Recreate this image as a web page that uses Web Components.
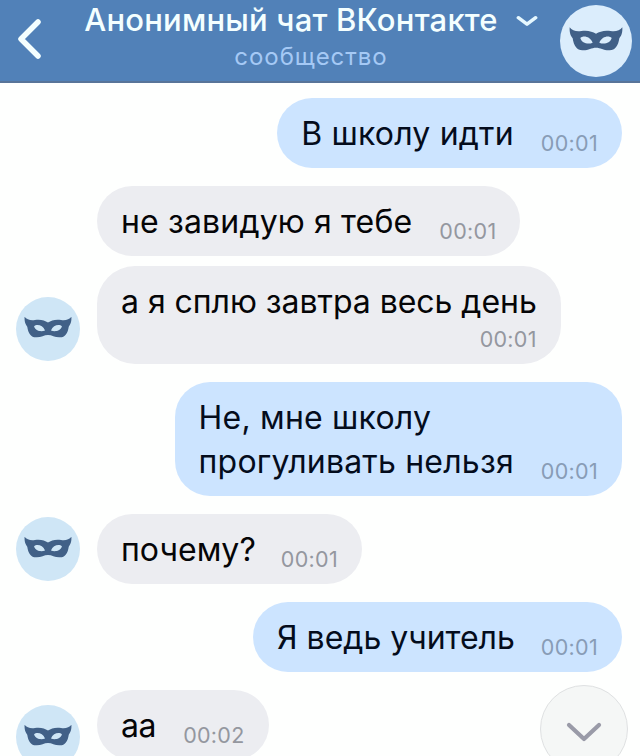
<!DOCTYPE html>
<html lang="ru">
<head>
<meta charset="utf-8">
<title>Анонимный чат ВКонтакте</title>
<style>
  html,
  body {
    height: 100%;
    margin: 0;
    overflow: hidden;
    background: #fefffe;
    font-family: Inter, "Liberation Sans", sans-serif;
  }
</style>
</head>
<body>
<chat-screen>
  <chat-header slot="header" name="Анонимный чат ВКонтакте" status="сообщество"></chat-header>
  <chat-message out time="00:01" style="--spacing: 0.2px">В школу идти</chat-message>
  <chat-message time="00:01" style="--spacing: 0.15px">не завидую я тебе</chat-message>
  <chat-message grouped avatar stacked time="00:01" style="--spacing: -0.04px">а я сплю завтра весь день</chat-message>
  <chat-message out time="00:01" style="--spacing: 0.2px">Не, мне школу<br>прогуливать нельзя</chat-message>
  <chat-message avatar time="00:01" style="--spacing: 0.05px; --gap: 25px">почему?</chat-message>
  <chat-message out time="00:01" style="--gap: 26px">Я ведь учитель</chat-message>
  <chat-message avatar style="--avatar-drop: -9px; --spacing: -0.4px" time="00:02">аа</chat-message>
  <scroll-button slot="floating"></scroll-button>
</chat-screen>

<script>
class MaskAvatar extends HTMLElement {
  constructor() {
    super();
    this.attachShadow({ mode: "open" });
  }

  static get styles() {
    return /* css */`
      :host {
        display: block;
        flex: none;
        width: var(--size, 64px);
        height: var(--size, 64px);
        border-radius: 50%;
        background: var(--avatar-color, #cfe6f6);
        overflow: hidden;
      }

      svg {
        display: block;
        width: 100%;
        height: 100%;
      }
    `;
  }

  connectedCallback() {
    this.shadowRoot.innerHTML = /* html */`
    <style>${MaskAvatar.styles}</style>
    <svg viewBox="0 0 216 216">
      <path fill="#416087" fill-rule="evenodd" d="M29 67 C36 77 49 80 64 78 C84 75 97 80 108 86 C119 80 132 75 152 78 C167 80 180 77 187 67 C188 84 184 93 178 100 C175 122 165 136 149 136 C131 137 122 128 108 128 C94 128 85 137 67 136 C51 136 41 122 38 100 C32 93 28 84 29 67 Z M61 99 C69 90 91 94 98 113 C85 119 65 115 61 99 Z M155 99 C147 90 125 94 118 113 C131 119 151 115 155 99 Z"/>
    </svg>`;
  }
}

class ChatHeader extends HTMLElement {
  constructor() {
    super();
    this.attachShadow({ mode: "open" });
  }

  static get styles() {
    return /* css */`
      :host {
        display: flex;
        box-sizing: border-box;
        height: 83px;
        padding: 0 8px 0 17px;
        border-bottom: 2px solid #587499;
        background: #5181b8;
      }

      .back {
        flex: none;
        width: 26px;
        height: 42px;
        margin-top: 18px;
      }

      .titles {
        flex: 1;
        display: flex;
        flex-direction: column;
        align-items: center;
        padding-left: 19px;
      }

      .name {
        display: flex;
        align-items: center;
        gap: 18px;
        height: 39px;
        color: #f4ffff;
        font-size: 31px;
        font-weight: 500;
        letter-spacing: 0.2px;
        white-space: nowrap;
      }

      .name svg {
        width: 22px;
        height: 13px;
        margin-top: 3px;
      }

      .status {
        color: #a5c9f5;
        font-size: 24px;
        line-height: 36px;
        letter-spacing: 0.95px;
      }

      mask-avatar {
        --size: 72px;
        --avatar-color: #dbedfc;
        margin-top: 5px;
      }
    `;
  }

  connectedCallback() {
    this.shadowRoot.innerHTML = /* html */`
    <style>${ChatHeader.styles}</style>
    <svg class="back" viewBox="0 0 26 42">
      <path d="M21 4 L4 21 L21 38" fill="none" stroke="#f4ffff" stroke-width="5.500" stroke-linecap="round" stroke-linejoin="round"/>
    </svg>
    <div class="titles">
      <div class="name">
        <span>${this.getAttribute("name")}</span>
        <svg viewBox="0 0 20 12">
          <path d="M2 2.500 L10 8.500 L18 2.500" fill="none" stroke="#e6f8ff" stroke-width="3.200" stroke-linecap="round" stroke-linejoin="round"/>
        </svg>
      </div>
      <div class="status">${this.getAttribute("status")}</div>
    </div>
    <mask-avatar></mask-avatar>`;
  }
}

class ChatMessage extends HTMLElement {
  constructor() {
    super();
    this.attachShadow({ mode: "open" });
  }

  static get styles() {
    return /* css */`
      :host {
        display: flex;
        align-items: flex-end;
        gap: 17px;
        margin-top: 18px;
        padding: 0 18px 0 16px;
      }

      :host([grouped]) {
        margin-top: 10px;
      }

      :host([out]) {
        justify-content: flex-end;
      }

      .side {
        flex: none;
        width: 64px;
      }

      .side mask-avatar {
        margin-top: -20px;
        margin-bottom: var(--avatar-drop, 3px);
      }

      .bubble {
        display: flex;
        align-items: flex-end;
        gap: var(--gap, 27px);
        box-sizing: border-box;
        min-height: 70px;
        padding: 14px 24px 12px;
        border-radius: 35px;
        background: #ecedf1;
        color: #050507;
      }

      :host([out]) .bubble {
        background: #cce4ff;
        color: #040c1c;
      }

      /* time goes on its own row when the text fills the bubble */
      :host([stacked]) .bubble {
        flex-direction: column;
        gap: 0;
        height: 98px;
        border-radius: 38px;
      }

      .text {
        font-size: 32px;
        line-height: 44px;
        letter-spacing: var(--spacing, 0);
        white-space: nowrap;
      }

      time {
        margin-bottom: -3px;
        color: #94979f;
        font-size: 21.5px;
        line-height: 32px;
        letter-spacing: 0.3px;
      }

      :host([stacked]) time {
        margin-top: -1px;
      }

      :host([out]) time {
        color: #889cb6;
      }
    `;
  }

  connectedCallback() {
    const side = this.hasAttribute("out") ? "" : `<div class="side">${this.hasAttribute("avatar") ? "<mask-avatar></mask-avatar>" : ""}</div>`;
    this.shadowRoot.innerHTML = /* html */`
    <style>${ChatMessage.styles}</style>
    ${side}
    <div class="bubble">
      <div class="text"><slot></slot></div>
      <time>${this.getAttribute("time")}</time>
    </div>`;
  }
}

class ScrollButton extends HTMLElement {
  constructor() {
    super();
    this.attachShadow({ mode: "open" });
  }

  static get styles() {
    return /* css */`
      :host {
        display: block;
        box-sizing: border-box;
        width: 88px;
        height: 88px;
        border: 1.5px solid #dfe1e2;
        border-radius: 50%;
        background: #f5f7f6;
      }

      svg {
        display: block;
        width: 36px;
        height: 22px;
        margin: 34px auto 0;
      }
    `;
  }

  connectedCallback() {
    this.shadowRoot.innerHTML = /* html */`
    <style>${ScrollButton.styles}</style>
    <svg viewBox="0 0 36 22">
      <path d="M3 5 L18 19 L33 5" fill="none" stroke="#9a9ba8" stroke-width="4.200" stroke-linecap="round" stroke-linejoin="round"/>
    </svg>`;
  }
}

class ChatScreen extends HTMLElement {
  constructor() {
    super();
    this.attachShadow({ mode: "open" });
  }

  static get styles() {
    return /* css */`
      :host {
        display: block;
        position: relative;
        width: 640px;
        height: 756px;
        overflow: hidden;
      }

      .messages {
        display: flex;
        flex-direction: column;
        margin-top: -3px;
      }

      .floating {
        position: absolute;
        right: 12px;
        bottom: -17px;
      }
    `;
  }

  connectedCallback() {
    this.shadowRoot.innerHTML = /* html */`
    <style>${ChatScreen.styles}</style>
    <slot name="header"></slot>
    <div class="messages"><slot></slot></div>
    <div class="floating"><slot name="floating"></slot></div>`;
  }
}

customElements.define("mask-avatar", MaskAvatar);
customElements.define("chat-header", ChatHeader);
customElements.define("chat-message", ChatMessage);
customElements.define("scroll-button", ScrollButton);
customElements.define("chat-screen", ChatScreen);
</script>
</body>
</html>
